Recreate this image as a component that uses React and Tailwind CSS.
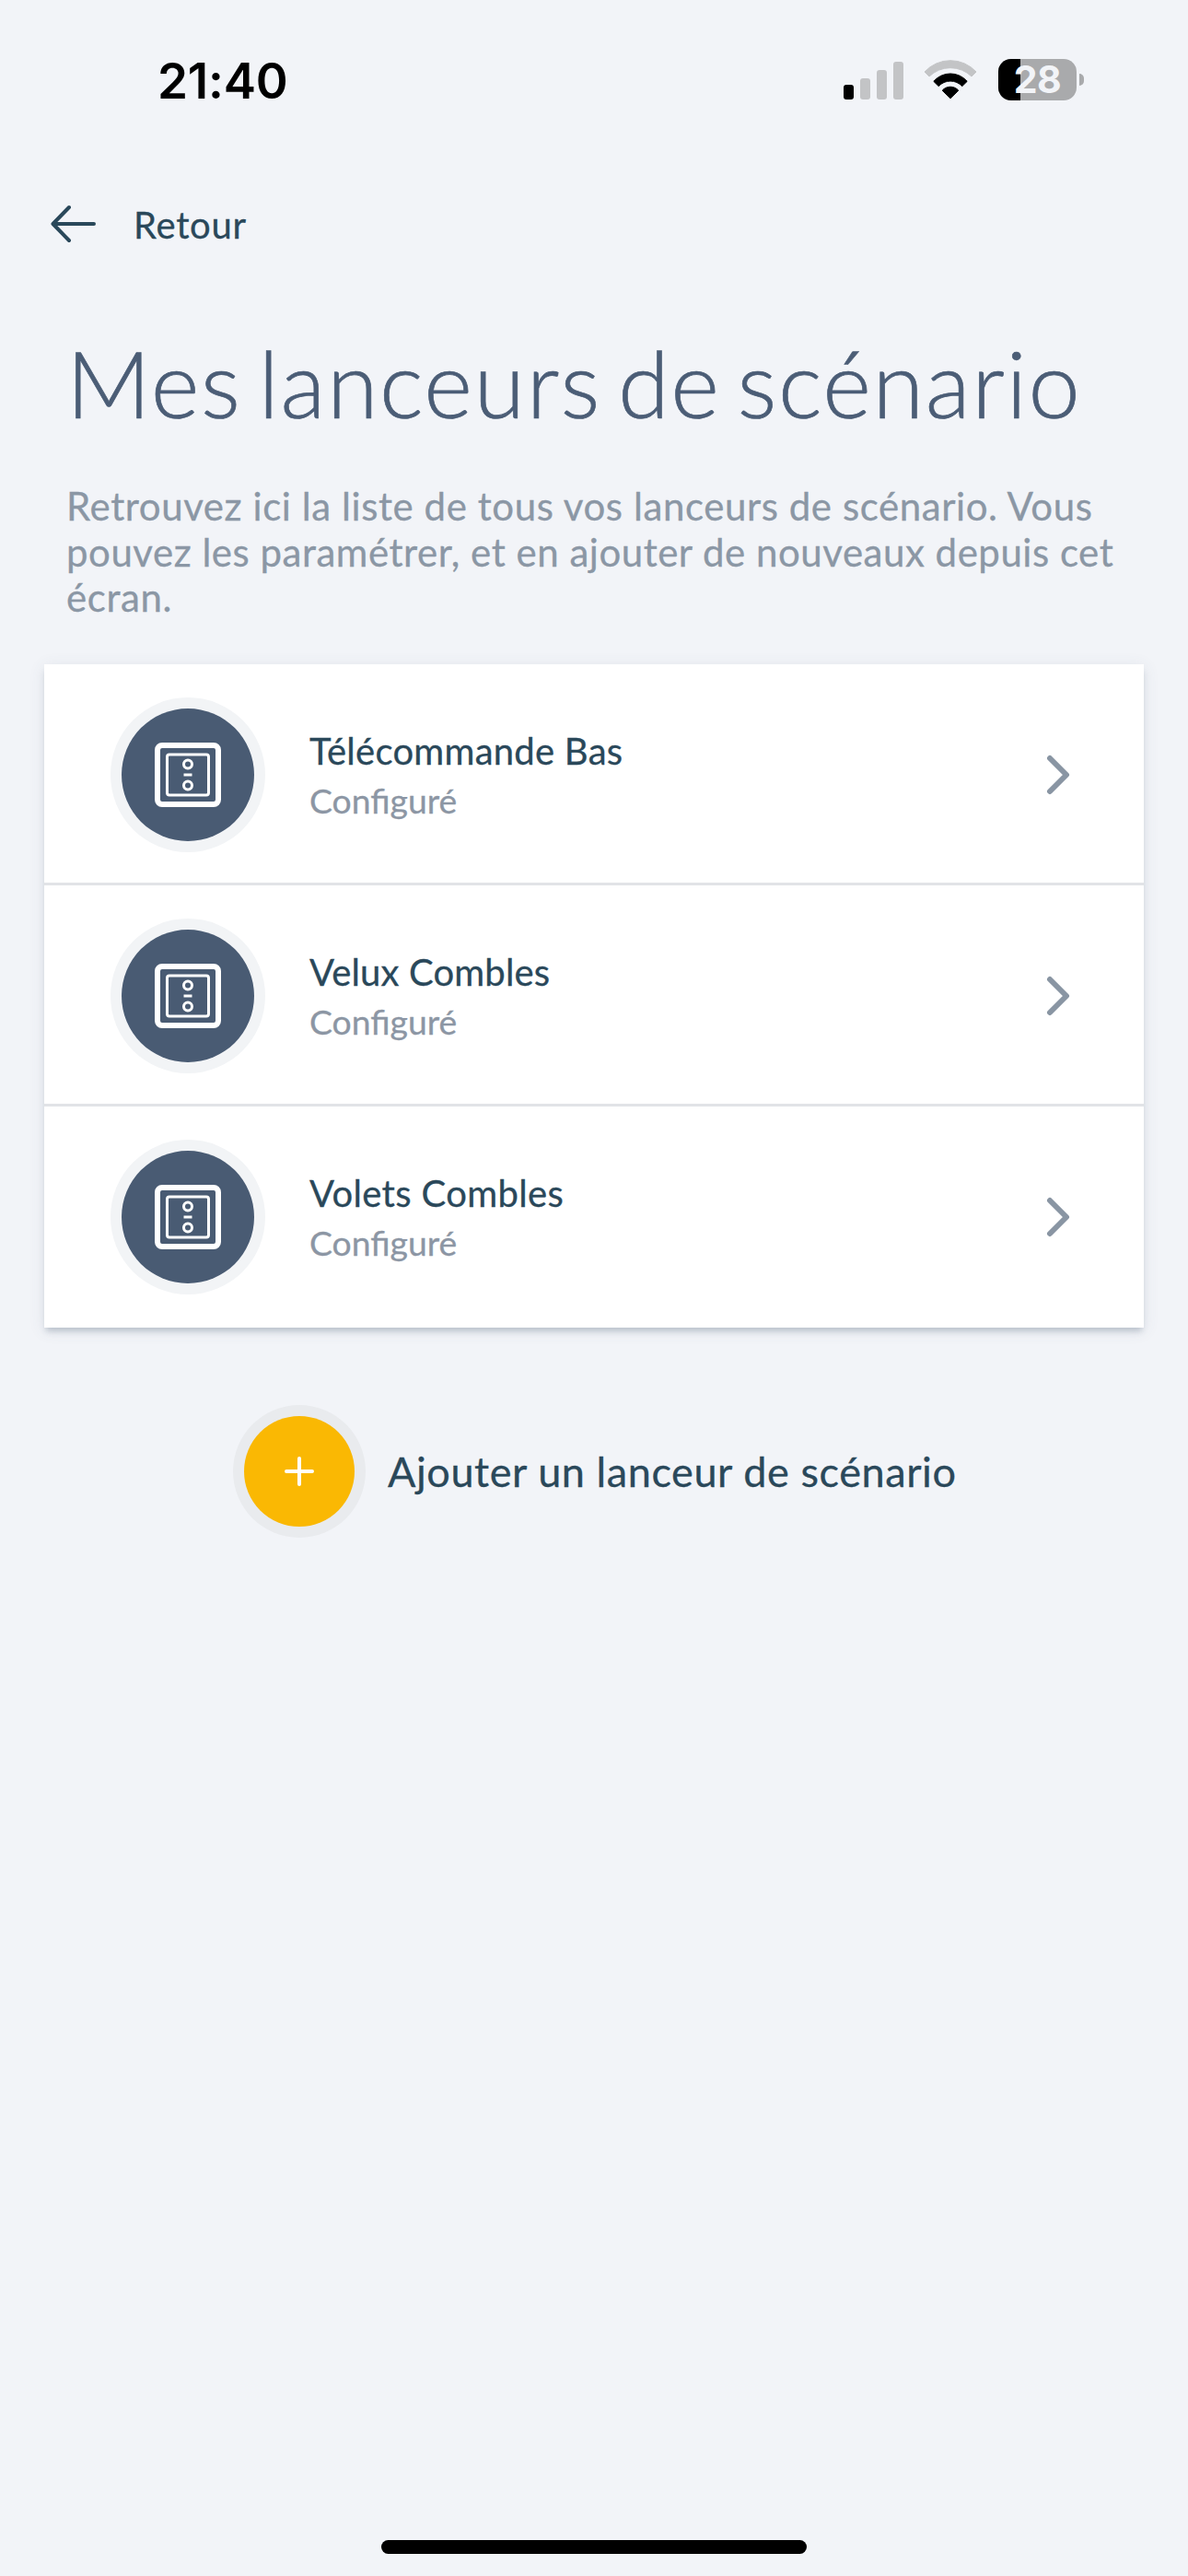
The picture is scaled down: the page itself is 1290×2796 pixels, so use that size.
const launchers = [
  { id: 1, name: 'Télécommande Bas', status: 'Configuré', tracking: 'tracking-[0.25px]' },
  { id: 2, name: 'Velux Combles', status: 'Configuré', tracking: 'tracking-[0.15px]' },
  { id: 3, name: 'Volets Combles', status: 'Configuré', tracking: 'tracking-[0.35px]' },
];

function SignalIcon() {
  return (
    <svg className="h-[42px] w-[66px]" viewBox="0 0 66 42">
      <rect x="0" y="26" width="11" height="16" rx="3" fill="#000" />
      <rect x="18" y="19" width="11" height="23" rx="3" fill="#c3c4c6" />
      <rect x="36" y="10" width="11" height="32" rx="3" fill="#c3c4c6" />
      <rect x="54" y="1" width="11" height="41" rx="3" fill="#c3c4c6" />
    </svg>
  );
}

function WifiIcon() {
  return (
    <svg className="h-[44px] w-[58px]" viewBox="0 0 58 44">
      <path d="M1 13 A38 38 0 0 1 57 13 L52 18 A33 33 0 0 0 6 18 Z" fill="#c3c4c6" stroke="#c3c4c6" strokeWidth="1" strokeLinejoin="round" />
      <path d="M10.8 23.3 A24 24 0 0 1 47.2 23.3 L41.8 28.6 A17.5 17.5 0 0 0 16.2 28.6 Z" fill="#000" stroke="#000" strokeWidth="1" strokeLinejoin="round" />
      <path d="M20.2 33.2 A11.7 11.7 0 0 1 37.8 33.2 L29 41.8 Z" fill="#000" stroke="#000" strokeWidth="1" strokeLinejoin="round" />
    </svg>
  );
}

function Battery({ level }) {
  return (
    <div className="flex items-center gap-[3px]">
      <div className="relative flex h-[45px] w-[85px] items-center justify-center rounded-[14px] bg-[#a9aaac]">
        <div className="absolute inset-y-0 left-0 rounded-l-[14px] bg-black" style={{ width: `${level}%` }} />
        <span className="relative font-['Inter'] text-[41px] leading-[45px] font-bold tracking-[-0.5px] text-[#f2f4f8]">{level}</span>
      </div>
      <div className="h-[13px] w-[5px] rounded-r-full bg-[#a9aaac]" />
    </div>
  );
}

function StatusBar() {
  return (
    <div className="flex h-[174px] items-start justify-between pt-[56px] pr-[113px] pl-[171px]">
      <span className="font-['Inter'] text-[53px] leading-[64px] font-semibold tracking-[-0.2px] text-black">21:40</span>
      <div className="flex items-center pt-[8px]">
        <SignalIcon />
        <div className="ml-[21px]"><WifiIcon /></div>
        <div className="ml-[23px]"><Battery level={28} /></div>
      </div>
    </div>
  );
}

function LauncherIcon() {
  return (
    <svg className="h-[70px] w-[72px]" viewBox="0 0 72 70" fill="none" stroke="#fff">
      <rect x="3" y="3" width="66" height="64" rx="5" strokeWidth="6" />
      <rect x="13.5" y="13" width="45" height="44" rx="2.5" strokeWidth="3" />
      <circle cx="36" cy="23.5" r="4.5" strokeWidth="3" />
      <path d="M31.5 35 H40.5" strokeWidth="3" />
      <circle cx="36" cy="46.5" r="4.5" strokeWidth="3" />
    </svg>
  );
}

function LauncherRow({ launcher, last }) {
  return (
    <button className={`flex h-[240px] w-full items-center pr-[80px] pl-[72px] text-left ${last ? '' : 'shadow-[inset_0_-3px_0_#e1e3e7]'}`}>
      <div className="flex size-[168px] items-center justify-center rounded-full bg-[#f2f4f6]">
        <div className="flex size-[144px] items-center justify-center rounded-full bg-[#495b73]">
          <LauncherIcon />
        </div>
      </div>
      <div className="ml-[48px] flex-1 pt-[2px]">
        <p className={`text-[40px] leading-[54px] text-[#2a485a] [-webkit-text-stroke:0.3px_#2a485a] ${launcher.tracking}`}>{launcher.name}</p>
        <p className="text-[37.3px] leading-[54px] text-[#8c96a4] [-webkit-text-stroke:0.3px_#8c96a4]">{launcher.status}</p>
      </div>
      <svg className="h-[44px] w-[26px]" viewBox="0 0 26 44" fill="none" stroke="#8995a3" strokeWidth="6" strokeLinecap="round" strokeLinejoin="round">
        <path d="M4 4 L22 22 L4 40" />
      </svg>
    </button>
  );
}

export default function App() {
  return (
    <div className="flex h-[2796px] w-[1290px] flex-col bg-[#f2f4f8] font-['Lato',sans-serif]">
      <StatusBar />

      {/* Back link */}
      <button className="flex h-[138px] items-center pl-[55px] text-[#2a485a]">
        <svg className="h-[42px] w-[50px]" viewBox="0 0 50 42" fill="none" stroke="currentColor" strokeWidth="4" strokeLinecap="round" strokeLinejoin="round">
          <path d="M47 21 H3 M20 3 L2.5 21 L20 39" />
        </svg>
        <span className="ml-[40px] pt-[2px] text-[40px] leading-[48px] tracking-[0.7px] [-webkit-text-stroke:0.3px_#2a485a]">Retour</span>
      </button>

      {/* Heading */}
      <div className="h-[409px] px-[72px] pt-[41px]">
        <h1 className="text-[101px] leading-[124px] font-light tracking-[1.6px] whitespace-nowrap text-[#4b5d76] [-webkit-text-stroke:0.7px_#4b5d76] [word-spacing:-11px]">Mes lanceurs de scénario</h1>
        <p className="mt-[48px] text-[42px] leading-[49.6px] tracking-[0.58px] whitespace-nowrap text-[#8b97a5] [-webkit-text-stroke:0.3px_#8b97a5]">
          Retrouvez ici la liste de tous vos lanceurs de scénario. Vous<br />
          <span className="tracking-[0.52px]">pouvez les paramétrer, et en ajouter de nouveaux depuis cet</span><br />
          écran.
        </p>
      </div>

      {/* Launchers */}
      <div className="mx-[48px] bg-white shadow-[0_6px_6px_-2px_rgba(73,91,115,0.26),0_3px_16px_rgba(73,91,115,0.12)]">
        {launchers.map((launcher, i) => (
          <LauncherRow key={launcher.id} launcher={launcher} last={i === launchers.length - 1} />
        ))}
      </div>

      {/* Add button */}
      <button className="mt-[84px] flex items-center pl-[253px]">
        <div className="flex size-[144px] items-center justify-center rounded-full bg-[#e9ebee]">
          <div className="flex size-[120px] items-center justify-center rounded-full bg-[#fab803]">
            <svg className="size-[32px]" viewBox="0 0 32 32" stroke="#fff" strokeWidth="4" strokeLinecap="round">
              <path d="M16 2 V30 M2 16 H30" />
            </svg>
          </div>
        </div>
        <span className="ml-[24px] text-[45px] leading-[54px] tracking-[0.58px] whitespace-nowrap text-[#2a485a] [-webkit-text-stroke:0.3px_#2a485a]">Ajouter un lanceur de scénario</span>
      </button>

      <div className="mx-auto mt-auto mb-[24px] h-[15px] w-[462px] rounded-full bg-black" />
    </div>
  );
}
